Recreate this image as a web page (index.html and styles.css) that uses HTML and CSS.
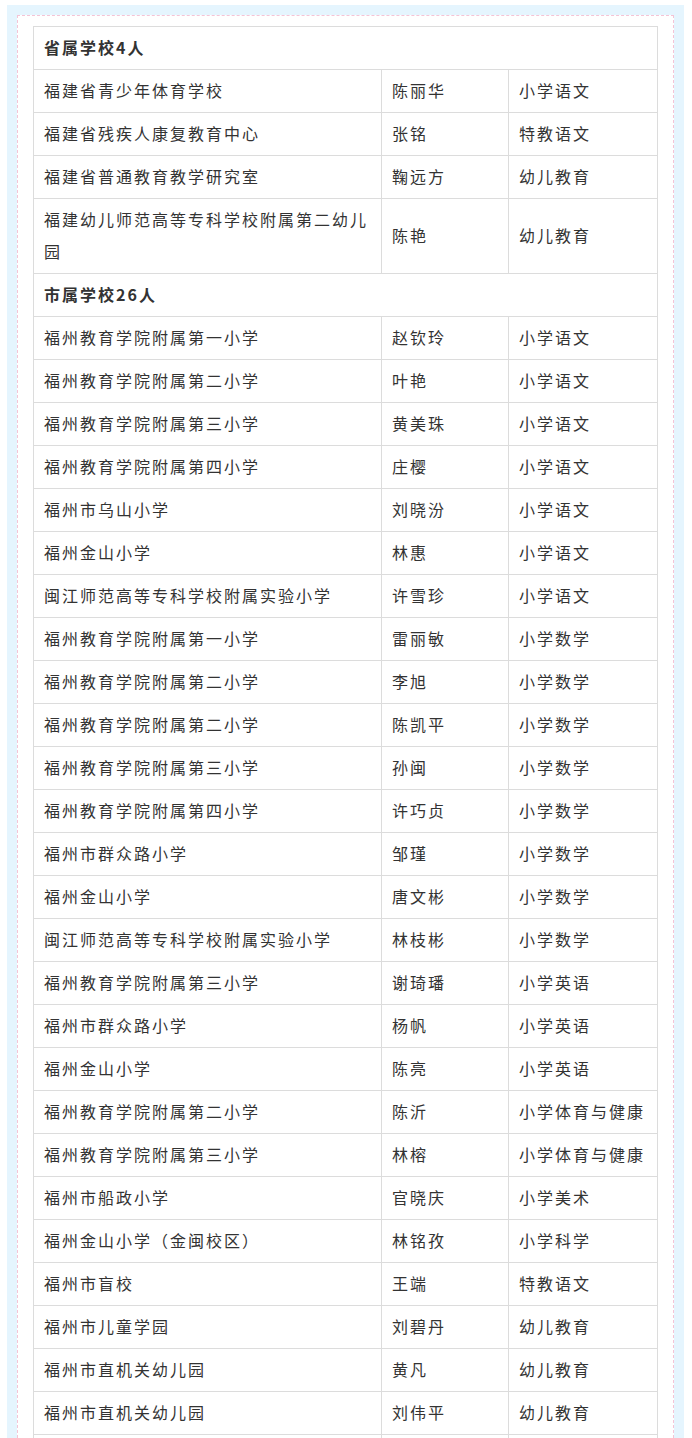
FILE: index.html
```html
<!DOCTYPE html>
<html lang="zh-CN">
<head>
<meta charset="utf-8">
<title>名单</title>
<link rel="stylesheet" href="styles.css">
</head>
<body>
<div class="outer">
  <div class="inner">
    <table class="list">
      <colgroup>
        <col class="c1"><col class="c2"><col class="c3">
      </colgroup>
      <tbody>
        <tr class="group"><td colspan="3">省属学校4人</td></tr>
        <tr><td>福建省青少年体育学校</td><td>陈丽华</td><td>小学语文</td></tr>
        <tr><td>福建省残疾人康复教育中心</td><td>张铭</td><td>特教语文</td></tr>
        <tr><td>福建省普通教育教学研究室</td><td>鞠远方</td><td>幼儿教育</td></tr>
        <tr><td>福建幼儿师范高等专科学校附属第二幼儿园</td><td>陈艳</td><td>幼儿教育</td></tr>
        <tr class="group"><td colspan="3">市属学校26人</td></tr>
        <tr><td>福州教育学院附属第一小学</td><td>赵钦玲</td><td>小学语文</td></tr>
        <tr><td>福州教育学院附属第二小学</td><td>叶艳</td><td>小学语文</td></tr>
        <tr><td>福州教育学院附属第三小学</td><td>黄美珠</td><td>小学语文</td></tr>
        <tr><td>福州教育学院附属第四小学</td><td>庄樱</td><td>小学语文</td></tr>
        <tr><td>福州市乌山小学</td><td>刘晓汾</td><td>小学语文</td></tr>
        <tr><td>福州金山小学</td><td>林惠</td><td>小学语文</td></tr>
        <tr><td>闽江师范高等专科学校附属实验小学</td><td>许雪珍</td><td>小学语文</td></tr>
        <tr><td>福州教育学院附属第一小学</td><td>雷丽敏</td><td>小学数学</td></tr>
        <tr><td>福州教育学院附属第二小学</td><td>李旭</td><td>小学数学</td></tr>
        <tr><td>福州教育学院附属第二小学</td><td>陈凯平</td><td>小学数学</td></tr>
        <tr><td>福州教育学院附属第三小学</td><td>孙闽</td><td>小学数学</td></tr>
        <tr><td>福州教育学院附属第四小学</td><td>许巧贞</td><td>小学数学</td></tr>
        <tr><td>福州市群众路小学</td><td>邹瑾</td><td>小学数学</td></tr>
        <tr><td>福州金山小学</td><td>唐文彬</td><td>小学数学</td></tr>
        <tr><td>闽江师范高等专科学校附属实验小学</td><td>林枝彬</td><td>小学数学</td></tr>
        <tr><td>福州教育学院附属第三小学</td><td>谢琦璠</td><td>小学英语</td></tr>
        <tr><td>福州市群众路小学</td><td>杨帆</td><td>小学英语</td></tr>
        <tr><td>福州金山小学</td><td>陈亮</td><td>小学英语</td></tr>
        <tr><td>福州教育学院附属第二小学</td><td>陈沂</td><td>小学体育与健康</td></tr>
        <tr><td>福州教育学院附属第三小学</td><td>林榕</td><td>小学体育与健康</td></tr>
        <tr><td>福州市船政小学</td><td>官晓庆</td><td>小学美术</td></tr>
        <tr><td>福州金山小学（金闽校区）</td><td>林铭孜</td><td>小学科学</td></tr>
        <tr><td>福州市盲校</td><td>王端</td><td>特教语文</td></tr>
        <tr><td>福州市儿童学园</td><td>刘碧丹</td><td>幼儿教育</td></tr>
        <tr><td>福州市直机关幼儿园</td><td>黄凡</td><td>幼儿教育</td></tr>
        <tr><td>福州市直机关幼儿园</td><td>刘伟平</td><td>幼儿教育</td></tr>
        <tr><td>&nbsp;</td><td>&nbsp;</td><td>&nbsp;</td></tr>
      </tbody>
    </table>
  </div>
</div>
</body>
</html>
```

FILE: styles.css
```css
html, body {
  margin: 0;
  padding: 0;
  background: #ffffff;
}

body {
  font-family: "Noto Sans CJK SC", "Noto Sans", sans-serif;
  color: #333333;
}

.outer {
  margin: 5px 0 0 7px;
  width: 677px;
  box-sizing: border-box;
  background: #e5f5fe;
  padding: 10px 10px 0 10px;
}

.inner {
  background: #ffffff;
  border: 1px dashed #f4c4d6;
  border-bottom: none;
  padding: 10px 15px 0 15px;
}

.list {
  width: 624px;
  table-layout: fixed;
  border-collapse: collapse;
  font-size: 16px;
  letter-spacing: 2px;
  line-height: 32px;
}

.c1 { width: 348px; }
.c2 { width: 127px; }
.c3 { width: 149px; }

.list td {
  border: 1px solid #dcdcdc;
  padding: 4px 10px 6px 10px;
  vertical-align: middle;
  text-align: left;
  word-break: break-all;
}

.group td {
  font-weight: bold;
}
```
